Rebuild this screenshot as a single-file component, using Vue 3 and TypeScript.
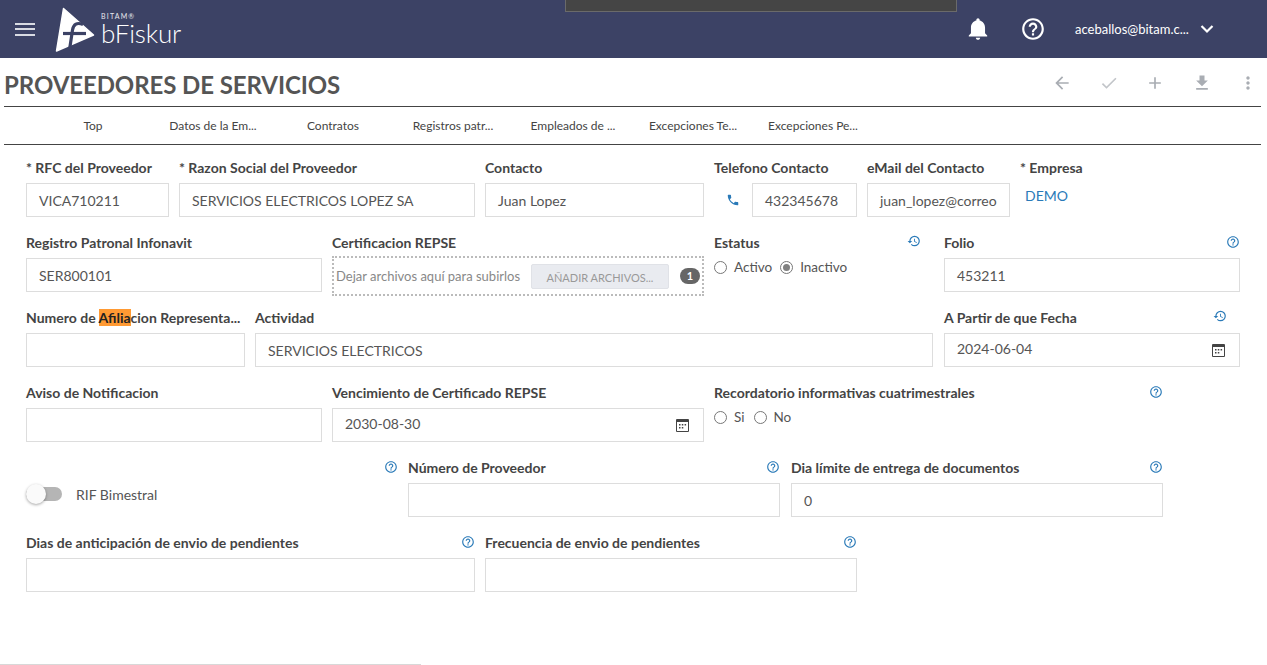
<script setup lang="ts">
const tabs = ['Top', 'Datos de la Em...', 'Contratos', 'Registros patr...', 'Empleados de ...', 'Excepciones Te...', 'Excepciones Pe...']
</script>

<template>
  <div class="page">
    <header class="topbar">
      <button class="burger" aria-label="menu"><span></span><span></span><span></span></button>
      <div class="logo">
        <svg width="42" height="48" viewBox="0 0 42 48" class="mark">
          <path fill="#fff" stroke="#fff" stroke-width="1.500" stroke-linejoin="round" d="M8.500 2.500 L38.500 29 L1.500 45 Z"/>
          <path fill="none" stroke="#3c4265" stroke-width="3.200" d="M28 18.500 Q19 15 17.500 24 L14.500 44"/>
          <path fill="none" stroke="#3c4265" stroke-width="3.200" d="M8 27.500 L31 27.500"/>
        </svg>
        <div class="wordmark">
          <span class="bitam">BITAM®</span>
          <span class="bfiskur">bFiskur</span>
        </div>
      </div>
      <div class="overlay-box"></div>
      <div class="top-right">
        <svg class="bell" width="26" height="26" viewBox="0 0 24 24"><path fill="#fff" d="M12 22c1.100 0 2-.9 2-2h-4c0 1.100.9 2 2 2zm6.500-6v-5.500c0-3.070-2.130-5.640-5-6.320V3.500C13.500 2.670 12.830 2 12 2s-1.500.67-1.500 1.500v.68c-2.870.68-5 3.250-5 6.320V16l-2 2v1h17v-1l-2-2z"/></svg>
        <svg class="help" width="26" height="26" viewBox="0 0 24 24"><path fill="#fff" d="M11 18h2v-2h-2v2zm1-16C6.480 2 2 6.480 2 12s4.480 10 10 10 10-4.480 10-10S17.520 2 12 2zm0 18c-4.410 0-8-3.590-8-8s3.590-8 8-8 8 3.590 8 8-3.590 8-8 8zm0-14c-2.210 0-4 1.790-4 4h2c0-1.100.9-2 2-2s2 .9 2 2c0 2-3 1.750-3 5h2c0-2.250 3-2.500 3-5 0-2.210-1.790-4-4-4z"/></svg>
        <span class="user">aceballos@bitam.c...</span>
        <svg class="chev" width="14" height="10" viewBox="0 0 14 10"><path d="M1.500 2 L7 7.500 L12.500 2" fill="none" stroke="#fff" stroke-width="2.200"/></svg>
      </div>
    </header>

    <section class="titlebar">
      <h1>PROVEEDORES DE SERVICIOS</h1>
      <div class="actions">
        <svg width="20" height="20" viewBox="0 0 24 24"><path fill="#a9adb3" d="M20 11H7.830l5.590-5.590L12 4l-8 8 8 8 1.410-1.410L7.830 13H20v-2z"/></svg>
        <svg width="20" height="20" viewBox="0 0 24 24"><path fill="#c2c5c9" d="M9 16.170 4.830 12l-1.420 1.410L9 19 21 7l-1.410-1.410z"/></svg>
        <svg width="20" height="20" viewBox="0 0 24 24"><path fill="#a9adb3" d="M19 13h-6v6h-2v-6H5v-2h6V5h2v6h6v2z"/></svg>
        <svg width="20" height="20" viewBox="0 0 24 24"><path fill="#a9adb3" d="M19 9h-4V3H9v6H5l7 7 7-7zM5 18v2h14v-2H5z"/></svg>
        <svg width="20" height="20" viewBox="0 0 24 24"><path fill="#a9adb3" d="M12 8c1.100 0 2-.9 2-2s-.9-2-2-2-2 .9-2 2 .9 2 2 2zm0 2c-1.100 0-2 .9-2 2s.9 2 2 2 2-.9 2-2-.9-2-2-2zm0 6c-1.100 0-2 .9-2 2s.9 2 2 2 2-.9 2-2-.9-2-2-2z"/></svg>
      </div>
    </section>

    <nav class="tabs">
      <span v-for="t in tabs" :key="t" class="tab">{{ t }}</span>
    </nav>

    <main class="form">
      <div class="row">
        <div class="field w143"><label>* RFC del Proveedor</label><div class="input">VICA710211</div></div>
        <div class="field w296"><label>* Razon Social del Proveedor</label><div class="input">SERVICIOS ELECTRICOS LOPEZ SA</div></div>
        <div class="field w219"><label>Contacto</label><div class="input">Juan Lopez</div></div>
        <div class="field w143">
          <label>Telefono Contacto</label>
          <div class="phone">
            <svg width="14" height="14" viewBox="0 0 24 24"><path fill="#2a7ab8" d="M6.620 10.790c1.440 2.830 3.760 5.140 6.590 6.590l2.200-2.200c.27-.27.67-.36 1.020-.24 1.120.37 2.330.57 3.570.57.550 0 1 .45 1 1V20c0 .55-.45 1-1 1-9.390 0-17-7.610-17-17 0-.55.45-1 1-1h3.500c.55 0 1 .45 1 1 0 1.250.2 2.450.57 3.570.11.350.03.740-.25 1.020l-2.200 2.200z"/></svg>
            <div class="input grow">432345678</div>
          </div>
        </div>
        <div class="field w143"><label>eMail del Contacto</label><div class="input clip">juan_lopez@correo</div></div>
        <div class="field w143"><label>* Empresa</label><div class="link">DEMO</div></div>
      </div>

      <div class="row">
        <div class="field w296"><label>Registro Patronal Infonavit</label><div class="input">SER800101</div></div>
        <div class="field w372">
          <label>Certificacion REPSE</label>
          <div class="upload">
            <span class="drop">Dejar archivos aquí para subirlos</span>
            <span class="add">AÑADIR ARCHIVOS...</span>
            <span class="badge">1</span>
          </div>
        </div>
        <div class="field w220">
          <label class="with-icon">Estatus
            <svg class="hist" viewBox="0 0 24 24"><path fill="#2a7ab8" d="M13 3a9 9 0 0 0-9 9H1l3.890 3.890.07.14L9 12H6c0-3.870 3.130-7 7-7s7 3.130 7 7-3.130 7-7 7c-1.930 0-3.680-.79-4.940-2.060l-1.420 1.420A8.954 8.954 0 0 0 13 21a9 9 0 0 0 0-18zm-1 5v5l4.280 2.540.72-1.210-3.500-2.080V8H12z"/></svg>
          </label>
          <div class="radios">
            <span class="radio"></span><span class="rlabel tight">Activo</span>
            <span class="radio on"></span><span class="rlabel">Inactivo</span>
          </div>
        </div>
        <div class="field w296">
          <label class="with-icon">Folio
            <svg class="q" viewBox="0 0 24 24"><path fill="#2a7ab8" d="M11 18h2v-2h-2v2zm1-16C6.480 2 2 6.480 2 12s4.480 10 10 10 10-4.480 10-10S17.520 2 12 2zm0 18c-4.410 0-8-3.590-8-8s3.590-8 8-8 8 3.590 8 8-3.590 8-8 8zm0-14c-2.210 0-4 1.790-4 4h2c0-1.100.9-2 2-2s2 .9 2 2c0 2-3 1.750-3 5h2c0-2.250 3-2.500 3-5 0-2.210-1.790-4-4-4z"/></svg>
          </label>
          <div class="input">453211</div>
        </div>
      </div>

      <div class="row">
        <div class="field w219"><label>Numero de <mark>Afilia</mark>cion Representa...</label><div class="input"></div></div>
        <div class="field w678"><label>Actividad</label><div class="input">SERVICIOS ELECTRICOS</div></div>
        <div class="field w296 nudge">
          <label class="with-icon">A Partir de que Fecha
            <svg class="hist h2" viewBox="0 0 24 24"><path fill="#2a7ab8" d="M13 3a9 9 0 0 0-9 9H1l3.890 3.890.07.14L9 12H6c0-3.870 3.130-7 7-7s7 3.130 7 7-3.130 7-7 7c-1.930 0-3.680-.79-4.940-2.060l-1.420 1.420A8.954 8.954 0 0 0 13 21a9 9 0 0 0 0-18zm-1 5v5l4.280 2.540.72-1.210-3.500-2.080V8H12z"/></svg>
          </label>
          <div class="input date">2024-06-04
            <svg width="15" height="15" viewBox="0 0 15 15"><path fill="#444" fill-rule="evenodd" d="M2 1h11a1 1 0 0 1 1 1v11a1 1 0 0 1-1 1H2a1 1 0 0 1-1-1V2a1 1 0 0 1 1-1zm0 3v9h11V4H2zm2 2h1.500v1.500H4zm2.800 0h1.500v1.500H6.800zm2.800 0h1.500v1.500H9.600zM4 9h1.500v1.500H4zm2.800 0h1.500v1.500H6.800z"/></svg>
          </div>
        </div>
      </div>

      <div class="row">
        <div class="field w296"><label>Aviso de Notificacion</label><div class="input"></div></div>
        <div class="field w372"><label>Vencimiento de Certificado REPSE</label>
          <div class="input date">2030-08-30
            <svg width="15" height="15" viewBox="0 0 15 15"><path fill="#444" fill-rule="evenodd" d="M2 1h11a1 1 0 0 1 1 1v11a1 1 0 0 1-1 1H2a1 1 0 0 1-1-1V2a1 1 0 0 1 1-1zm0 3v9h11V4H2zm2 2h1.500v1.500H4zm2.800 0h1.500v1.500H6.800zm2.800 0h1.500v1.500H9.600zM4 9h1.500v1.500H4zm2.800 0h1.500v1.500H6.800z"/></svg>
          </div>
        </div>
        <div class="field w449">
          <label class="with-icon">Recordatorio informativas cuatrimestrales
            <svg class="q" viewBox="0 0 24 24"><path fill="#2a7ab8" d="M11 18h2v-2h-2v2zm1-16C6.480 2 2 6.480 2 12s4.480 10 10 10 10-4.480 10-10S17.520 2 12 2zm0 18c-4.410 0-8-3.590-8-8s3.590-8 8-8 8 3.590 8 8-3.590 8-8 8zm0-14c-2.210 0-4 1.790-4 4h2c0-1.100.9-2 2-2s2 .9 2 2c0 2-3 1.750-3 5h2c0-2.250 3-2.500 3-5 0-2.210-1.790-4-4-4z"/></svg>
          </label>
          <div class="radios">
            <span class="radio"></span><span class="rlabel">Si</span>
            <span class="radio"></span><span class="rlabel">No</span>
          </div>
        </div>
      </div>

      <div class="row">
        <div class="field w372 toggle-field">
          <svg class="q corner" viewBox="0 0 24 24"><path fill="#2a7ab8" d="M11 18h2v-2h-2v2zm1-16C6.480 2 2 6.480 2 12s4.480 10 10 10 10-4.480 10-10S17.520 2 12 2zm0 18c-4.410 0-8-3.590-8-8s3.590-8 8-8 8 3.590 8 8-3.590 8-8 8zm0-14c-2.210 0-4 1.790-4 4h2c0-1.100.9-2 2-2s2 .9 2 2c0 2-3 1.750-3 5h2c0-2.250 3-2.500 3-5 0-2.210-1.790-4-4-4z"/></svg>
          <div class="toggle"><span class="track"></span><span class="thumb"></span><span class="tlabel">RIF Bimestral</span></div>
        </div>
        <div class="field w372">
          <label class="with-icon">Número de Proveedor
            <svg class="q" viewBox="0 0 24 24"><path fill="#2a7ab8" d="M11 18h2v-2h-2v2zm1-16C6.480 2 2 6.480 2 12s4.480 10 10 10 10-4.480 10-10S17.520 2 12 2zm0 18c-4.410 0-8-3.590-8-8s3.590-8 8-8 8 3.590 8 8-3.590 8-8 8zm0-14c-2.210 0-4 1.790-4 4h2c0-1.100.9-2 2-2s2 .9 2 2c0 2-3 1.750-3 5h2c0-2.250 3-2.500 3-5 0-2.210-1.790-4-4-4z"/></svg>
          </label>
          <div class="input"></div>
        </div>
        <div class="field w372 nudge">
          <label class="with-icon">Dia límite de entrega de documentos
            <svg class="q" viewBox="0 0 24 24"><path fill="#2a7ab8" d="M11 18h2v-2h-2v2zm1-16C6.480 2 2 6.480 2 12s4.480 10 10 10 10-4.480 10-10S17.520 2 12 2zm0 18c-4.410 0-8-3.590-8-8s3.590-8 8-8 8 3.590 8 8-3.590 8-8 8zm0-14c-2.210 0-4 1.790-4 4h2c0-1.100.9-2 2-2s2 .9 2 2c0 2-3 1.750-3 5h2c0-2.250 3-2.500 3-5 0-2.210-1.790-4-4-4z"/></svg>
          </label>
          <div class="input">0</div>
        </div>
      </div>

      <div class="row">
        <div class="field w449">
          <label class="with-icon">Dias de anticipación de envio de pendientes
            <svg class="q" viewBox="0 0 24 24"><path fill="#2a7ab8" d="M11 18h2v-2h-2v2zm1-16C6.480 2 2 6.480 2 12s4.480 10 10 10 10-4.480 10-10S17.520 2 12 2zm0 18c-4.410 0-8-3.590-8-8s3.590-8 8-8 8 3.590 8 8-3.590 8-8 8zm0-14c-2.210 0-4 1.790-4 4h2c0-1.100.9-2 2-2s2 .9 2 2c0 2-3 1.750-3 5h2c0-2.250 3-2.500 3-5 0-2.210-1.790-4-4-4z"/></svg>
          </label>
          <div class="input"></div>
        </div>
        <div class="field w372">
          <label class="with-icon">Frecuencia de envio de pendientes
            <svg class="q" viewBox="0 0 24 24"><path fill="#2a7ab8" d="M11 18h2v-2h-2v2zm1-16C6.480 2 2 6.480 2 12s4.480 10 10 10 10-4.480 10-10S17.520 2 12 2zm0 18c-4.410 0-8-3.590-8-8s3.590-8 8-8 8 3.590 8 8-3.590 8-8 8zm0-14c-2.210 0-4 1.790-4 4h2c0-1.100.9-2 2-2s2 .9 2 2c0 2-3 1.750-3 5h2c0-2.250 3-2.500 3-5 0-2.210-1.790-4-4-4z"/></svg>
          </label>
          <div class="input"></div>
        </div>
      </div>
    </main>
    <div class="bottom-line"></div>
  </div>
</template>

<style>
html, body { margin: 0; background: #fff; overflow: hidden; }
</style>

<style scoped>
.page { position: relative; width: 1267px; height: 665px; overflow: hidden; font-family: Lato, "Liberation Sans", sans-serif; color: #555; background: #fff; }
.topbar { position: relative; height: 58px; background: #3c4265; display: flex; align-items: center; }
.burger { width: 20px; height: 13px; margin-left: 15px; padding: 0; border: 0; background: none; display: flex; flex-direction: column; justify-content: space-between; }
.burger span { display: block; height: 2px; background: #d9dbe3; }
.logo { display: flex; align-items: center; margin-left: 20px; }
.mark { margin-top: 1px; }
.wordmark { display: flex; flex-direction: column; margin-left: 4px; color: #fff; }
.bitam { font-size: 7px; letter-spacing: 1.200px; line-height: 8px; color: #e6e7ee; }
.bfiskur { font-size: 26px; font-weight: 300; line-height: 26px; letter-spacing: -0.150px; }
.overlay-box { position: absolute; left: 565px; top: -2px; width: 390px; height: 12px; background: #454545; border: 1px solid #6a6a6a; }
.top-right { margin-left: auto; display: flex; align-items: center; height: 58px; color: #fff; }
.bell { margin-right: 29px; }
.help { margin-right: 29px; }
.user { font-size: 13px; width: 120px; white-space: nowrap; }
.chev { margin-left: 5px; margin-right: 53px; }
.titlebar { height: 48px; display: flex; align-items: center; justify-content: space-between; margin: 0 6px 0 4px; border-bottom: 1px solid #444; box-sizing: content-box; }
h1 { margin: 6px 0 0; font-size: 24px; font-weight: 700; color: #555; line-height: 30px; letter-spacing: -0.080px; }
.actions { display: flex; gap: 26.500px; margin: 2px 3px 0 0; }
.tabs { height: 37px; margin: 0 6px 0 4px; border-bottom: 1px solid #444; display: flex; align-items: center; padding-left: 29px; }
.tab { width: 120px; text-align: center; font-size: 12px; color: #444; }
.form { padding: 13px 0 0 26px; }
.row { display: flex; gap: 10px; height: 75px; }
.field { position: relative; flex: none; }
.nudge { margin-left: 1px; }
.w143 { width: 143px; }
.w219 { width: 219px; }
.w220 { width: 220px; }
.w296 { width: 296px; }
.w372 { width: 372px; }
.w449 { width: 449px; }
.w678 { width: 678px; }
label { display: block; height: 25px; line-height: 20px; font-size: 14px; font-weight: 700; color: #444; white-space: nowrap; }
label.with-icon { display: flex; justify-content: space-between; }
mark { background: #ff9a33; color: #222; }
.input { box-sizing: border-box; height: 34px; border: 1px solid #ddd; padding: 0 12px; line-height: 34px; font-size: 14px; color: #555; white-space: nowrap; overflow: hidden; }
.grow { flex: 1; }
.phone { display: flex; align-items: center; gap: 12px; padding-left: 12px; }
.phone svg { flex: none; }
.link { font-size: 14px; color: #2a7ab8; padding-left: 5px; line-height: 26px; }
.upload { box-sizing: border-box; height: 40px; border: 2px dotted #bbb; display: flex; align-items: center; margin-top: -2px; padding-left: 2px; }
.drop { font-size: 13px; color: #888; width: 195px; white-space: nowrap; }
.add { box-sizing: border-box; width: 138px; height: 25px; line-height: 25px; border: 1px solid #e0e2e7; border-radius: 2px; background: #e9ebf0; text-align: center; font-size: 11px; color: #999; margin-top: 1px; }
.badge { width: 20px; height: 16px; line-height: 16px; border-radius: 8px; background: #666; color: #fff; font-size: 11px; font-weight: 700; text-align: center; margin-left: 11px; }
.radios { display: flex; align-items: center; height: 18px; margin-top: 0; }
.radio { box-sizing: border-box; width: 13px; height: 13px; border-radius: 50%; border: 1px solid #777; background: #fff; margin-right: 7px; position: relative; }
.radio.on::after { content: ""; position: absolute; left: 2px; top: 2px; width: 7px; height: 7px; border-radius: 50%; background: #808080; }
.rlabel { font-size: 13.500px; color: #555; margin-right: 9px; }
.rlabel.tight { margin-right: 8px; }
.hist { width: 14px; height: 14px; margin: 1px 13px 0 0; }
.h2 { margin-right: 13px; }
.q { width: 14px; height: 14px; margin-top: 2px; }
.corner { position: absolute; right: 0; top: 0; }
.date { display: flex; justify-content: space-between; align-items: center; padding-right: 13px; padding-bottom: 2px; }
.date svg { margin-top: 2px; }
.toggle { position: relative; display: flex; align-items: center; height: 34px; margin-top: 19px; }
.track { position: absolute; left: 0; top: 10px; width: 36px; height: 14px; border-radius: 7px; background: #b5b5b5; }
.thumb { position: absolute; left: 0; top: 7px; width: 20px; height: 20px; border-radius: 50%; background: #fafafa; box-shadow: 0 1px 3px rgba(0,0,0,.35); }
.tlabel { margin-left: 50px; font-size: 14px; color: #555; }
.bottom-line { position: absolute; left: 0; top: 664px; width: 421px; height: 1px; background: #d8d8d8; }
</style>
